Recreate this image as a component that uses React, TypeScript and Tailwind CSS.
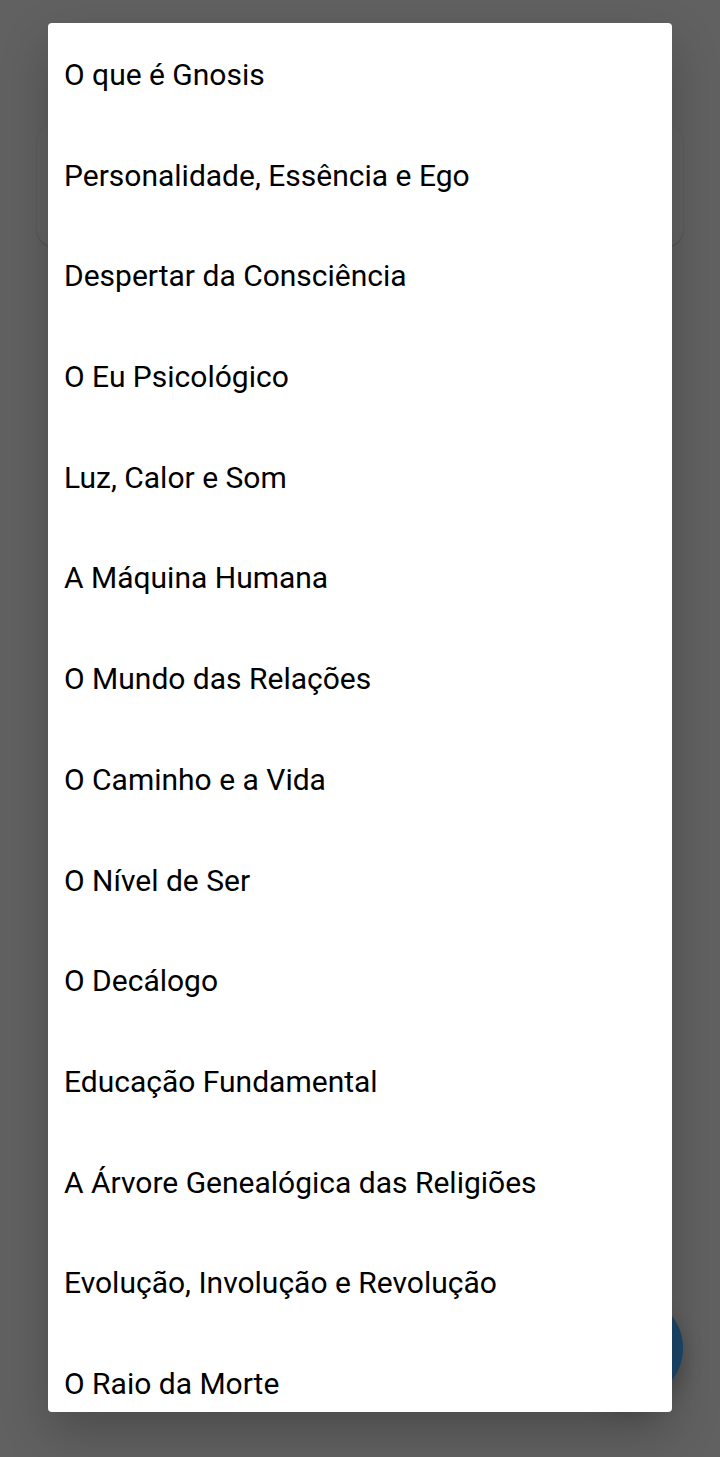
const topics = [
  "O que é Gnosis",
  "Personalidade, Essência e Ego",
  "Despertar da Consciência",
  "O Eu Psicológico",
  "Luz, Calor e Som",
  "A Máquina Humana",
  "O Mundo das Relações",
  "O Caminho e a Vida",
  "O Nível de Ser",
  "O Decálogo",
  "Educação Fundamental",
  "A Árvore Genealógica das Religiões",
  "Evolução, Involução e Revolução",
  "O Raio da Morte",
];

function TopicMenu() {
  return (
    <div
      role="dialog"
      aria-label="Temas"
      className="relative flex grow flex-col rounded bg-white shadow-[0_20px_48px_rgba(0,0,0,0.22)]"
    >
      <ul className="flex grow flex-col justify-between px-4 pt-[34px] pb-[10px]">
        {topics.map((topic) => (
          <li key={topic}>
            <button type="button" className="block w-full text-left text-[30px] leading-9 text-black">
              {topic}
            </button>
          </li>
        ))}
      </ul>
    </div>
  );
}

export default function App() {
  return (
    <div className="relative flex min-h-screen flex-col bg-[#616161] px-12 pt-[23px] pb-[45px] font-['Roboto',sans-serif]">
      {/* Dimmed page behind the menu */}
      <div className="absolute inset-x-[37px] top-[124px] h-[123px] rounded-[18px] bg-[#626262] shadow-[0_1px_2px_rgba(0,0,0,0.2)]" />
      <div className="absolute right-[37px] bottom-[57px] size-[104px] rounded-full bg-[#1b4668] shadow-[0_10px_20px_rgba(0,0,0,0.25)]" />
      <TopicMenu />
    </div>
  );
}
